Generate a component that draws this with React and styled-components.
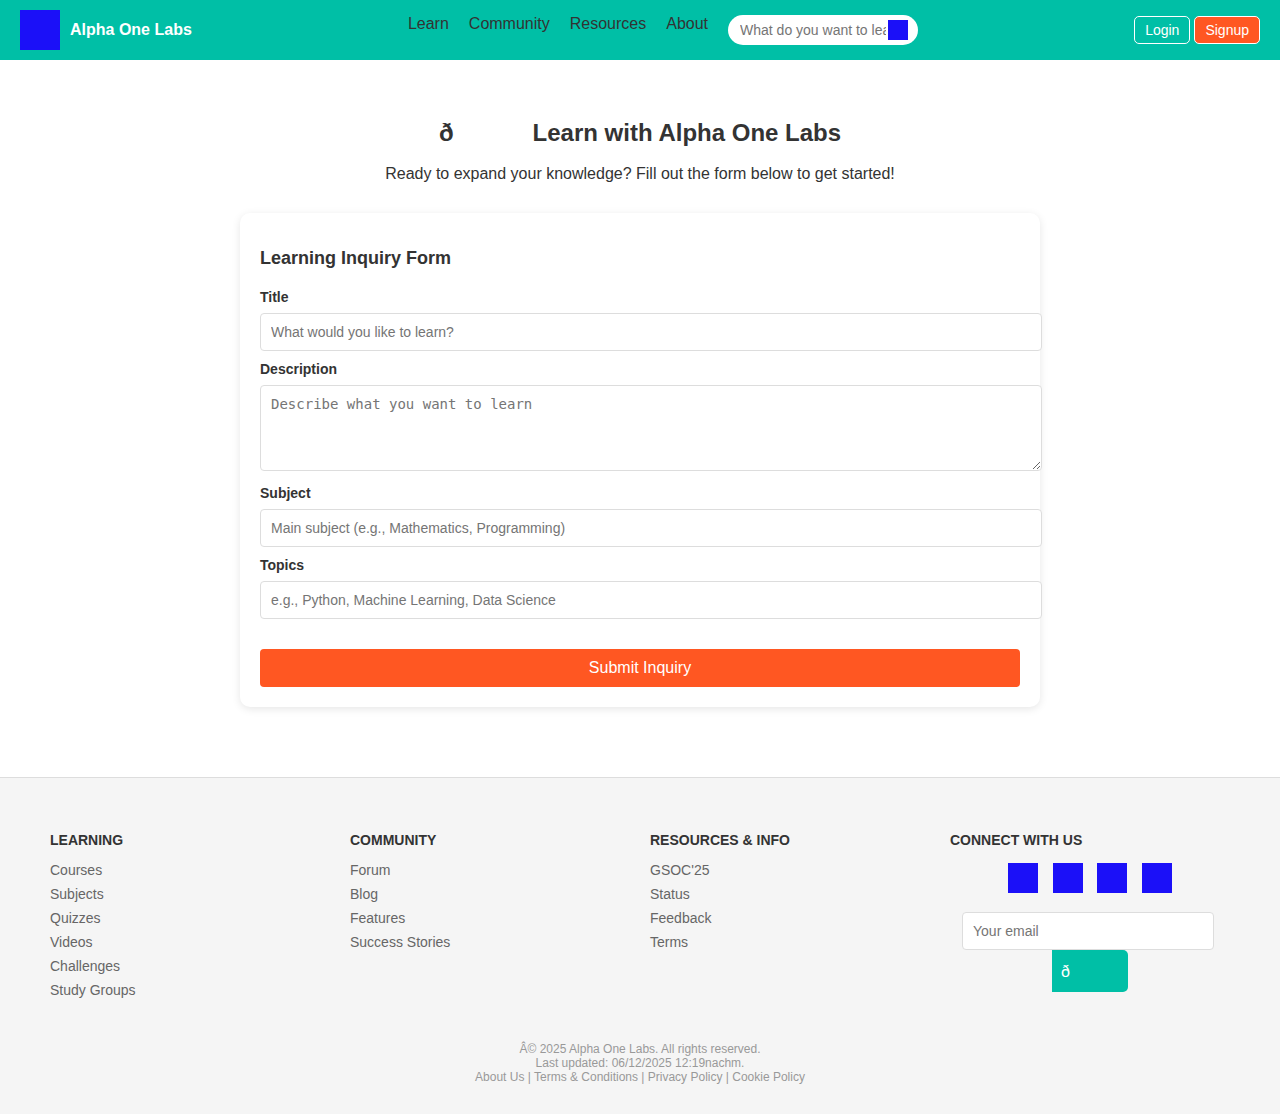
import React from "react";
import styled, { createGlobalStyle, css } from "styled-components";

const GlobalStyle = createGlobalStyle`
  body {
    margin: 0;
    background: #fff;
    color: #333;
    font-family: "Liberation Sans", Arial, sans-serif;
    font-size: 16px;
  }
`;

const Header = styled.header`
  display: flex;
  justify-content: space-between;
  align-items: center;
  height: 60px;
  padding: 0 20px;
  box-sizing: border-box;
  background: #00bfa6;
`;

const Brand = styled.div`
  display: flex;
  align-items: center;
  gap: 10px;
  color: #fff;
  font-weight: bold;
`;

const Block = styled.span`
  display: block;
  flex: none;
  width: ${(p) => p.$size}px;
  height: ${(p) => p.$size}px;
  background: #1b10f8;
`;

const Nav = styled.nav`
  display: flex;
  gap: 20px;
  height: 30px;
`;

const NavLink = styled.a`
  line-height: 18px;
  color: #333;
`;

const Search = styled.div`
  display: flex;
  align-items: center;
  width: 190px;
  height: 30px;
  padding: 0 10px;
  box-sizing: border-box;
  border-radius: 20px;
  background: #fff;
`;

const SearchInput = styled.input`
  width: 150px;
  box-sizing: border-box;
  padding: 1px 2px;
  border: none;
  outline: none;
  background: transparent;
  font: 14px "Liberation Sans", Arial, sans-serif;
`;

const Auth = styled.div`
  display: flex;
  gap: 4px;
`;

const AuthButton = styled.button`
  height: 28px;
  padding: 0 10px;
  border: 1px solid #fff;
  border-radius: 5px;
  background: ${(p) => (p.$filled ? "#ff5722" : "transparent")};
  color: #fff;
  font: 14px "Liberation Sans", Arial, sans-serif;
`;

const Main = styled.main`
  display: flex;
  flex-direction: column;
  align-items: center;
  padding: 59px 20px 70px;
`;

const PageTitle = styled.h2`
  display: flex;
  margin: 0;
  font-size: 24px;
  line-height: 27px;
`;

const Glyph = styled.span`
  margin-right: ${(p) => p.$gap}px;
`;

const Intro = styled.p`
  margin: 19px 0 30px;
  line-height: 18px;
`;

const Card = styled.form`
  display: flex;
  flex-direction: column;
  width: 800px;
  padding: 35px 20px 20px;
  box-sizing: border-box;
  border-radius: 10px;
  background: #fff;
  box-shadow: 0 2px 8px rgba(0, 0, 0, 0.1);
`;

const CardTitle = styled.h3`
  margin: 0 0 20px;
  font-size: 18px;
  line-height: 21px;
`;

const Label = styled.label`
  margin-bottom: 8px;
  font-size: 14px;
  font-weight: bold;
  line-height: 16px;
`;

const field = css`
  box-sizing: border-box;
  padding: 10px;
  border: 1px solid #ddd;
  border-radius: 4px;
  background: #fff;
  font-size: 14px;
`;

const Input = styled.input`
  ${field}
  width: ${(p) => p.$width || 782}px;
  height: 38px;
  margin: 0 0 10px;
  font-family: "Liberation Sans", Arial, sans-serif;
`;

const TextArea = styled.textarea`
  ${field}
  width: 782px;
  height: 86px;
  margin: 0 0 14px;
  font-family: "DejaVu Sans Mono", monospace;
`;

const Submit = styled.button`
  height: 38px;
  margin-top: 20px;
  border: none;
  border-radius: 4px;
  background: #ff5722;
  color: #fff;
  font: 16px "Liberation Sans", Arial, sans-serif;
`;

const Footer = styled.footer`
  height: 337px;
  padding: 54px 50px 0;
  box-sizing: border-box;
  border-top: 1px solid #ddd;
  background: #f5f5f5;
`;

const Columns = styled.div`
  display: grid;
  grid-template-columns: repeat(4, 280px);
  gap: 20px;
  height: 210px;
`;

const Column = styled.div`
  display: flex;
  flex-direction: column;
`;

const ColumnTitle = styled.h4`
  margin: 0 0 14px;
  font-size: 14px;
  line-height: 16px;
`;

const FooterLink = styled.a`
  margin-bottom: 8px;
  color: #666;
  font-size: 14px;
  line-height: 16px;
`;

const Social = styled.div`
  display: flex;
  justify-content: center;
  gap: 14.6px;
  margin: 1px 0 19px;
`;

const Subscribe = styled.div`
  display: flex;
  flex-direction: column;
  align-items: center;
`;

const EmailInput = styled(Input)`
  margin: 0 4px 0 0;
`;

const SubscribeButton = styled.button`
  width: 76px;
  height: 42px;
  padding: 2px 9px 0;
  border: none;
  border-radius: 0 5px 5px 0;
  background: #00bfa6;
  color: #fff;
  text-align: left;
  font: 16px "Liberation Sans", Arial, sans-serif;
`;

const Legal = styled.div`
  color: #999;
  font-size: 12px;
  line-height: 14px;
  text-align: center;
`;

const navItems = ["Learn", "Community", "Resources", "About"];

const footerColumns = [
  ["LEARNING", ["Courses", "Subjects", "Quizzes", "Videos", "Challenges", "Study Groups"]],
  ["COMMUNITY", ["Forum", "Blog", "Features", "Success Stories"]],
  ["RESOURCES & INFO", ["GSOC'25", "Status", "Feedback", "Terms"]],
];

export default function App() {
  return (
    <>
      <GlobalStyle />
      <Header>
        <Brand>
          <Block $size={40} />
          <span>Alpha One Labs</span>
        </Brand>
        <Nav>
          {navItems.map((item) => (
            <NavLink key={item}>{item}</NavLink>
          ))}
          <Search>
            <SearchInput placeholder="What do you want to learn?" />
            <Block $size={20} />
          </Search>
        </Nav>
        <Auth>
          <AuthButton>Login</AuthButton>
          <AuthButton $filled>Signup</AuthButton>
        </Auth>
      </Header>
      <Main>
        <PageTitle>
          <Glyph $gap={79}>ð</Glyph>
          <span>Learn with Alpha One Labs</span>
        </PageTitle>
        <Intro>Ready to expand your knowledge? Fill out the form below to get started!</Intro>
        <Card>
          <CardTitle>Learning Inquiry Form</CardTitle>
          <Label htmlFor="title">Title</Label>
          <Input id="title" placeholder="What would you like to learn?" />
          <Label htmlFor="description">Description</Label>
          <TextArea id="description" placeholder="Describe what you want to learn" />
          <Label htmlFor="subject">Subject</Label>
          <Input id="subject" placeholder="Main subject (e.g., Mathematics, Programming)" />
          <Label htmlFor="topics">Topics</Label>
          <Input id="topics" placeholder="e.g., Python, Machine Learning, Data Science" />
          <Submit type="button">Submit Inquiry</Submit>
        </Card>
      </Main>
      <Footer>
        <Columns>
          {footerColumns.map(([title, links]) => (
            <Column key={title}>
              <ColumnTitle>{title}</ColumnTitle>
              {links.map((link) => (
                <FooterLink key={link}>{link}</FooterLink>
              ))}
            </Column>
          ))}
          <Column>
            <ColumnTitle>CONNECT WITH US</ColumnTitle>
            <Social>
              <Block $size={30} />
              <Block $size={30} />
              <Block $size={30} />
              <Block $size={30} />
            </Social>
            <Subscribe>
              <EmailInput $width={252} placeholder="Your email" />
              <SubscribeButton>ð</SubscribeButton>
            </Subscribe>
          </Column>
        </Columns>
        <Legal>
          <div>Â© 2025 Alpha One Labs. All rights reserved.</div>
          <div>Last updated: 06/12/2025 12:19nachm.</div>
          <div>About Us | Terms &amp; Conditions | Privacy Policy | Cookie Policy</div>
        </Legal>
      </Footer>
    </>
  );
}
